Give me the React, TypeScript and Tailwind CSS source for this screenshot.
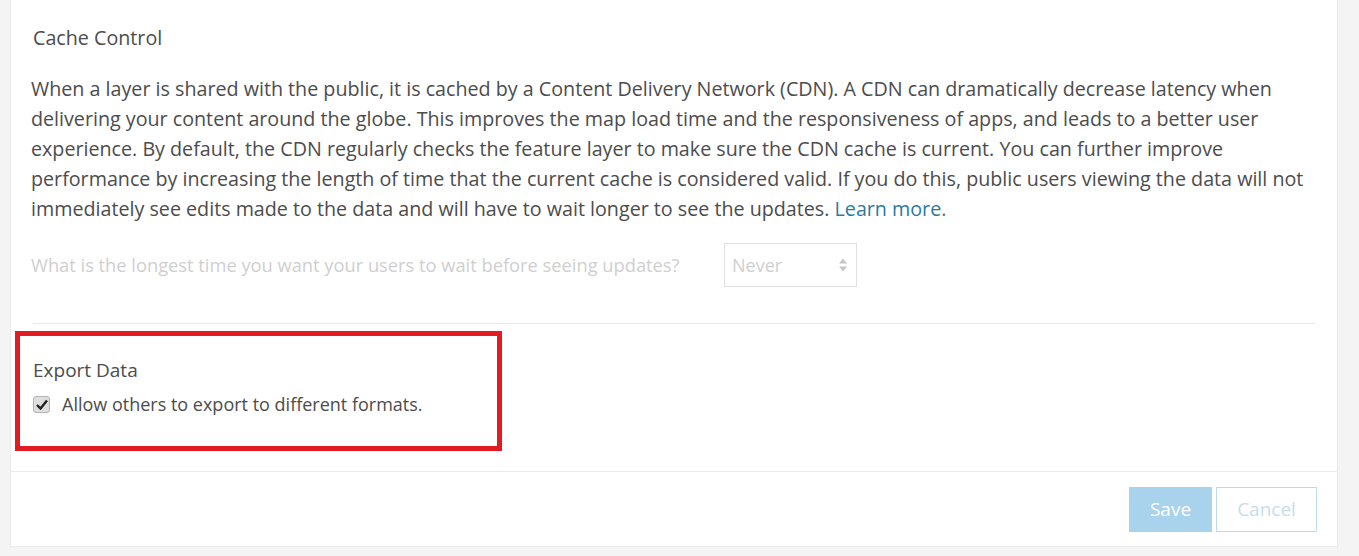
import React from 'react';

const font = { fontFamily: '"Open Sans", "Noto Sans", sans-serif' };

const lines = [
  'When a layer is shared with the public, it is cached by a Content Delivery Network (CDN). A CDN can dramatically decrease latency when',
  'delivering your content around the globe. This improves the map load time and the responsiveness of apps, and leads to a better user',
  'experience. By default, the CDN regularly checks the feature layer to make sure the CDN cache is current. You can further improve',
  'performance by increasing the length of time that the current cache is considered valid. If you do this, public users viewing the data will not',
];

const App: React.FC = () => {
  return (
    <div className="w-full h-[556px] bg-[#f4f4f4] pl-[10px] pr-[21px] pb-[9px]" style={font}>
      <div className="h-full bg-white border-x border-b border-[#ebebeb] flex flex-col">
        {/* Cache control */}
        <div className="pl-[22px] pr-[20px] pt-[26px]">
          <h3 className="text-[19.7px] leading-[24px] text-[#4c4c4c]">Cache Control</h3>
          <p className="mt-[24px] ml-[-2px] text-[19.7px] leading-[30px] text-[#4c4c4c] whitespace-nowrap">
            {lines.map((l) => (
              <span key={l} className="block">{l}</span>
            ))}
            <span className="block">
              immediately see edits made to the data and will have to wait longer to see the updates.{' '}
              <a className="text-[#2a7aa1]">Learn more.</a>
            </span>
          </p>
          <div className="mt-[19px] ml-[-2px] flex items-center">
            <span className="w-[693px] text-[18.3px] text-[#cfcfcf]">
              What is the longest time you want your users to wait before seeing updates?
            </span>
            <div className="w-[133px] h-[44px] border border-[#e0e0e0] flex items-center justify-between pl-[7px] pr-[8px]">
              <span className="text-[18px] text-[#cfcfcf]">Never</span>
              <svg width="10" height="16" viewBox="0 0 10 16">
                <path d="M1 6.5 L5 1.5 L9 6.5 Z" fill="#c4c4c4" />
                <path d="M1 9.5 L5 14.5 L9 9.5 Z" fill="#c4c4c4" />
              </svg>
            </div>
          </div>
        </div>
        <div className="mx-[22px] mt-[36px] border-t border-[#e8e8e8]" />

        {/* Export data, marked */}
        <div className="ml-[4px] mt-[7px] w-[487px] h-[120px] border-[5px] border-[#e31c24] pl-[13px] pt-[22px]">
          <div className="text-[19px] leading-[24px] text-[#4c4c4c]">Export Data</div>
          <label className="mt-[9px] flex items-center gap-[12px]">
            <span className="w-[17px] h-[17px] rounded-[3px] bg-[#dedede] border border-[#b5b5b5] flex items-center justify-center">
              <svg width="12" height="11" viewBox="0 0 12 11">
                <path d="M1 6 L4.5 9.5 L11 1.5" stroke="#222" strokeWidth="2.4" fill="none" />
              </svg>
            </span>
            <span className="text-[18px] text-[#4c4c4c]">Allow others to export to different formats.</span>
          </label>
        </div>

        <div className="mt-[20px] border-t border-[#ececec]" />
        <div className="flex justify-end gap-[4px] pr-[20px] pt-[15px]">
          <button className="w-[83px] h-[45px] bg-[#a9d3ec] text-white text-[19px]">Save</button>
          <button className="w-[101px] h-[45px] border border-[#bcdcec] text-[#c8dde9] text-[19px]">Cancel</button>
        </div>
      </div>
    </div>
  );
};

export default App;
